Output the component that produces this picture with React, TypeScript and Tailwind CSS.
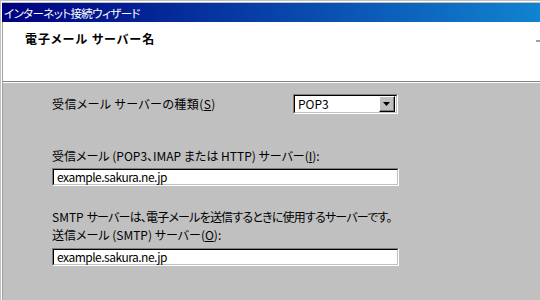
import React from "react";

const font = { fontFamily: '"Noto Sans CJK JP", "Noto Sans", sans-serif' };

function Sunken({ children, className }: { children: React.ReactNode; className: string }) {
  return (
    <div className={`border-t border-l border-t-[#808080] border-l-[#808080] border-b border-r border-b-white border-r-white ${className}`}>
      <div className="h-full border-t border-l border-t-black border-l-black border-b border-r border-b-[#c0c0c0] border-r-[#c0c0c0] bg-white flex items-center">
        {children}
      </div>
    </div>
  );
}

export default function App() {
  return (
    <div
      className="w-[540px] h-[300px] overflow-hidden bg-[#c0c0c0] text-[12px] text-black [font-feature-settings:'palt'] flex flex-col border-t border-l border-t-[#c0c0c0] border-l-[#c0c0c0]"
      style={font}
    >
      <div className="flex flex-col flex-1 border-t border-l border-t-white border-l-white">
        <div className="h-[19px] mt-[1px] flex items-center pl-[2px] text-white text-[11.5px] tracking-[-0.6px] bg-[linear-gradient(to_right,#000080,#1084d0)] leading-[12px]">
          インターネット接続ウィザード
        </div>
        <div className="flex flex-col flex-1 border-l border-l-[#a0a0a0]">
          <div className="h-[59px] bg-white flex justify-between">
            <div className="pl-[22px] pt-[10px] font-bold text-[12px] tracking-[1px] leading-[14px]">電子メール サーバー名</div>
            <div className="mt-[18px] w-[4px] h-[2px] bg-[#a0a0a0]" />
          </div>
          <div className="h-[1px] bg-[#808080]" />
          <div className="h-[1px] bg-white" />
          <div className="flex-1 flex flex-col pl-[49px]">
            <div className="mt-[11px] h-[20px] flex items-center">
              <div className="w-[241px] leading-[14px] tracking-[0.4px]">
                受信メール サーバーの種類(<span className="underline">S</span>)
              </div>
              <Sunken className="w-[105px] h-[20px]">
                <span className="pl-[3px] flex-1 leading-[14px]">POP3</span>
                <div className="mr-[1px] w-[16px] h-[16px] bg-[#c0c0c0] border-t border-l border-t-white border-l-white border-b border-r border-b-black border-r-black">
                  <div className="h-full border-b border-r border-b-[#808080] border-r-[#808080] flex items-center justify-center">
                    <svg width="7" height="4" viewBox="0 0 7 4">
                      <path d="M0 0h7L3.5 4z" fill="#000" />
                    </svg>
                  </div>
                </div>
              </Sunken>
            </div>
            <div className="mt-[35px] leading-[14px]">
              受信メール (POP3、IMAP または HTTP) サーバー(<span className="underline">I</span>):
            </div>
            <Sunken className="mt-[5px] w-[347px] h-[18px]">
              <span className="pl-[3px] leading-[14px] tracking-[-0.5px]">example.sakura.ne.jp</span>
            </Sunken>
            <div className="mt-[24px] leading-[14px] flex">
              <span>SMTP</span>
              <span className="ml-[3px] tracking-[-0.8px]">サーバーは、電子メールを送信するときに使用するサーバーです。</span>
            </div>
            <div className="mt-[4px] leading-[14px]">
              送信メール (SMTP) サーバー(<span className="underline">O</span>):
            </div>
            <Sunken className="mt-[6px] w-[347px] h-[18px]">
              <span className="pl-[3px] leading-[14px] tracking-[-0.5px]">example.sakura.ne.jp</span>
            </Sunken>
          </div>
        </div>
      </div>
    </div>
  );
}
